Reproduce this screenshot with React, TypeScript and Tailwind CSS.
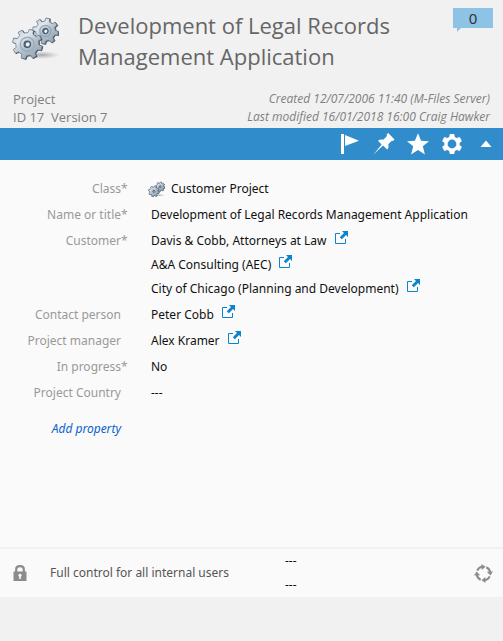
import type { ReactNode } from 'react';

function gearPath(cx: number, cy: number, outer: number, inner: number, hole: number, turn: number): string {
  const teeth = 8;
  const step = (Math.PI * 2) / teeth;
  const points: string[] = [];
  const at = (r: number, a: number) => `${(cx + r * Math.cos(a)).toFixed(2)} ${(cy + r * Math.sin(a)).toFixed(2)}`;
  for (let i = 0; i < teeth; i++) {
    const a = turn + i * step;
    points.push(at(inner, a - step * 0.28), at(outer, a - step * 0.19), at(outer, a + step * 0.19), at(inner, a + step * 0.28));
  }
  return `M${points.join('L')}ZM${at(hole, 0)}A${hole} ${hole} 0 1 0 ${at(hole, Math.PI)}A${hole} ${hole} 0 1 0 ${at(hole, 0)}Z`;
}

function Gears({ className, id, line = 0.7 }: { className: string; id: string; line?: number }) {
  return (
    <svg className={className} viewBox="0 0 48 46" aria-hidden="true">
      <defs>
        <linearGradient id={`${id}-metal`} x1="0" y1="0" x2="0.8" y2="1">
          <stop offset="0" stopColor="#b4c0cb" />
          <stop offset="0.35" stopColor="#e0e7ed" />
          <stop offset="0.6" stopColor="#b3c0cc" />
          <stop offset="1" stopColor="#93a3b2" />
        </linearGradient>
        <radialGradient id={`${id}-shadow`}>
          <stop offset="0" stopColor="#777" stopOpacity="0.6" />
          <stop offset="1" stopColor="#999" stopOpacity="0" />
        </radialGradient>
      </defs>
      <ellipse cx="31" cy="39" rx="18" ry="4" fill={`url(#${id}-shadow)`} />
      <g fill={`url(#${id}-metal)`} fillRule="evenodd" strokeLinejoin="round">
        <path d={gearPath(35.2, 15.4, 13, 10, 2.4, 0.18)} fill="#394957" stroke="#394957" strokeWidth={line} />
        <path d={gearPath(34.4, 15, 13, 10, 2.4, 0.18)} stroke="#66788a" strokeWidth={line} />
        <circle cx="34.4" cy="15" r="5.5" fill="none" stroke="#94a8ba" strokeWidth="1.4" />
        <circle cx="34.4" cy="15" r="2.8" fill="none" stroke="#40566a" strokeWidth="1" />
        <path d={gearPath(17.1, 28.6, 15, 11.6, 2.8, 0.28)} fill="#394957" stroke="#394957" strokeWidth={line} />
        <path d={gearPath(16.3, 28.2, 15, 11.6, 2.8, 0.28)} stroke="#66788a" strokeWidth={line} />
        <circle cx="16.3" cy="28.2" r="7" fill="none" stroke="#9aadbf" strokeWidth="1.4" />
        <circle cx="16.3" cy="28.2" r="3.2" fill="none" stroke="#40566a" strokeWidth="1.1" />
      </g>
    </svg>
  );
}

function OpenLink({ name }: { name: string }) {
  return (
    <a href="#" aria-label={`Open ${name}`} className="mb-2 text-[#0a84cf]">
      <svg className="h-[13px] w-[13px]" viewBox="0 0 13 13" aria-hidden="true">
        <path d="M5 2.5H.5v10h10V8" fill="none" stroke="currentColor" />
        <path d="M7 0h6v6l-2-2-4.2 4.2-2-2L9 2z" fill="currentColor" />
      </svg>
    </a>
  );
}

function Property({ label, required = false, children }: { label: string; required?: boolean; children: ReactNode }) {
  return (
    <div className="flex py-px leading-6">
      <dt className="flex w-[127px] shrink-0 justify-end text-[#999]">
        {label}
        <span className="w-[6px]">{required ? '*' : ''}</span>
      </dt>
      <dd className="min-w-0 flex-1 pl-6 text-[#111]">{children}</dd>
    </div>
  );
}

function Linked({ name }: { name: string }) {
  return (
    <div className="flex h-6 items-center gap-2">
      {name}
      <OpenLink name={name} />
    </div>
  );
}

function ToolButton({ label, children }: { label: string; children: ReactNode }) {
  return (
    <button type="button" aria-label={label} className="flex h-8 w-[34px] items-center justify-center">
      <svg className="h-[22px] w-[22px]" viewBox="0 0 22 22" fill="currentColor" aria-hidden="true">
        {children}
      </svg>
    </button>
  );
}

export default function App() {
  return (
    <div className="min-h-screen bg-[#f1f1f1] font-['Noto_Sans','Open_Sans',sans-serif] text-[12px]">
      <header className="px-[10px] pb-[2px] pt-2">
        <div className="flex items-start">
          <Gears id="project" className="mt-2 ml-px h-[46px] w-12 shrink-0" />
          <h1 className="min-w-0 flex-1 pt-[2px] pl-[19px] font-['Open_Sans','Noto_Sans',sans-serif] text-[22px] leading-[31px] text-[#666]">
            Development of Legal Records Management Application
          </h1>
          <button type="button" aria-label="Comments: 0" className="relative h-5 w-10 shrink-0 bg-[#8dc4e5] text-[15px] leading-5 text-[#333]">
            0
            <svg className="absolute top-5 left-1 h-1 w-1" viewBox="0 0 4 4" aria-hidden="true">
              <path d="M0 0h4L0 4z" fill="#8dc4e5" />
            </svg>
          </button>
        </div>
        <div className="flex items-end justify-between px-[3px] pt-[18px] font-['Open_Sans','Noto_Sans',sans-serif] leading-[18px] text-[#808080]">
          <div className="text-[13px]">
            <p>Project</p>
            <p className="whitespace-pre">ID 17  Version 7</p>
          </div>
          <div className="text-right italic">
            <p>Created 12/07/2006 11:40 (M-Files Server)</p>
            <p>Last modified 16/01/2018 16:00 Craig Hawker</p>
          </div>
        </div>
      </header>

      <nav aria-label="Object actions" className="flex h-8 justify-end bg-[#318ccc] text-white">
        <ToolButton label="Follow">
          <path d="M2 1h3v20H2zM6 2l14 5.8L6 13z" />
        </ToolButton>
        <ToolButton label="Pin">
          <path d="M15.2 0L21.5 6.4 20 8l-1.2-.3-3.6 3.6c.7 2.2.3 4-1 5.3L10 12.6 0.5 21.5 8.6 11.4 5 7.7c1.5-1.3 3.3-1.5 5.3-.9L14 3.1l-.4-1.5z" />
        </ToolButton>
        <ToolButton label="Add to favorites">
          <path d="M11 .3l3.1 7.5 7.9.4-6.2 5.1 2.1 8.1L11 17l-6.9 4.4 2.1-8.1L0 8.2l7.9-.4z" />
        </ToolButton>
        <ToolButton label="Settings">
          <path fillRule="evenodd" d="M8.8 1h4.4l.6 3 1.9 1.1 3-1 2.2 3.8-2.3 2v2.2l2.3 2-2.2 3.8-3-1-1.900 1.100-.6 3H8.800l-.6-3-1.900-1.100-3 1L1.100 14.100l2.300-2V9.900l-2.300-2 2.200-3.800 3 1L8.200 4zM11 6.600a4.400 4.400 0 1 0 0 8.800 4.400 4.400 0 0 0 0-8.800z" />
        </ToolButton>
        <ToolButton label="Collapse">
          <path d="M11 7.5l5.500 6.500h-11z" />
        </ToolButton>
      </nav>

      <main className="bg-[#fafafa]">
        <section aria-label="Properties" className="min-h-[387px] pt-4">
          <dl>
            <Property label="Class" required>
              <div className="-ml-[3px] flex items-center gap-[6px]">
                <Gears id="class" line={1.6} className="h-[17px] w-[17px]" />
                Customer Project
              </div>
            </Property>
            <Property label="Name or title" required>
              Development of Legal Records Management Application
            </Property>
            <Property label="Customer" required>
              <Linked name="Davis & Cobb, Attorneys at Law" />
              <Linked name="A&A Consulting (AEC)" />
              <Linked name="City of Chicago (Planning and Development)" />
            </Property>
            <Property label="Contact person">
              <Linked name="Peter Cobb" />
            </Property>
            <Property label="Project manager">
              <Linked name="Alex Kramer" />
            </Property>
            <Property label="In progress" required>
              No
            </Property>
            <Property label="Project Country">---</Property>
          </dl>
          <div className="flex w-[121px] justify-end pt-[11px] leading-6">
            <button type="button" className="text-[#0a62cc] italic">
              Add property
            </button>
          </div>
        </section>

        <footer className="flex items-center border-t-2 border-[#f1f1f1] pr-[10px] pl-[13px] text-[#555]">
          <svg className="h-4 w-[14px] shrink-0" viewBox="0 0 14 16" aria-hidden="true">
            <path d="M3.2 7V4.200C3.200 2 4.600 1.200 7 1.200s3.800.8 3.800 3V7" fill="none" stroke="#8c8c8c" strokeWidth="2.2" />
            <path fillRule="evenodd" fill="#8c8c8c" d="M.5 6.500h13V16H.5zM7 8.700a1.600 1.600 0 0 0-.8 3V14h1.600v-2.300a1.600 1.600 0 0 0-.8-3z" />
          </svg>
          <p className="ml-[23px] w-[235px]">Full control for all internal users</p>
          <div className="flex-1 text-[#111]">
            <p className="leading-6">---</p>
            <p className="leading-6">---</p>
          </div>
          <button type="button" aria-label="Workflow" className="text-[#8c8c8c]">
            <svg className="h-[19px] w-[19px]" viewBox="0 0 20 20" aria-hidden="true">
              {[0, 90, 180, 270].map((angle) => (
                <g key={angle} transform={`rotate(${angle} 10 10)`}>
                  <path d="M3.4 7A7.200 7.200 0 0 1 8.500 3" fill="none" stroke="currentColor" strokeWidth="2.2" />
                  <path d="M7.800 0l4.400 2.800-4 3.600z" fill="currentColor" />
                </g>
              ))}
            </svg>
          </button>
        </footer>
      </main>
    </div>
  );
}
